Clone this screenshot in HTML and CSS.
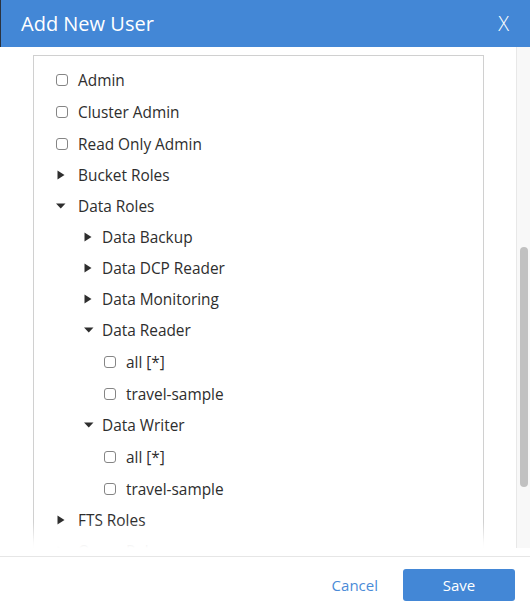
FILE: index.html
```html
<!DOCTYPE html>
<html>
<head>
<meta charset="utf-8">
<link rel="stylesheet" href="styles.css">
</head>
<body>
<div class="modal">
  <header class="modal-header">
    <h1 class="title">Add New User</h1>
    <span class="close">X</span>
  </header>
  <div class="modal-body">
    <div class="scroll-content">
      <div class="roles-box">
        <div class="row cb l1"><span class="slot"><span class="checkbox"></span></span><span class="label">Admin</span></div>
        <div class="row cb l1"><span class="slot"><span class="checkbox"></span></span><span class="label">Cluster Admin</span></div>
        <div class="row cb l1"><span class="slot"><span class="checkbox"></span></span><span class="label">Read Only Admin</span></div>
        <div class="row l1"><span class="slot"><svg class="arrow-r" width="8" height="10" viewBox="0 0 8 10"><path d="M0.5 0.5 L7.5 5 L0.5 9.5 Z"/></svg></span><span class="label">Bucket Roles</span></div>
        <div class="row l1"><span class="slot"><svg class="arrow-d" width="10" height="6" viewBox="0 0 10 6"><path d="M0 0.5 L9.5 0.5 L4.75 5.5 Z"/></svg></span><span class="label">Data Roles</span></div>
        <div class="row l2"><span class="slot"><svg class="arrow-r" width="8" height="10" viewBox="0 0 8 10"><path d="M0.5 0.5 L7.5 5 L0.5 9.5 Z"/></svg></span><span class="label">Data Backup</span></div>
        <div class="row l2"><span class="slot"><svg class="arrow-r" width="8" height="10" viewBox="0 0 8 10"><path d="M0.5 0.5 L7.5 5 L0.5 9.5 Z"/></svg></span><span class="label">Data DCP Reader</span></div>
        <div class="row l2"><span class="slot"><svg class="arrow-r" width="8" height="10" viewBox="0 0 8 10"><path d="M0.5 0.5 L7.5 5 L0.5 9.5 Z"/></svg></span><span class="label">Data Monitoring</span></div>
        <div class="row l2"><span class="slot"><svg class="arrow-d" width="10" height="6" viewBox="0 0 10 6"><path d="M0 0.5 L9.5 0.5 L4.75 5.5 Z"/></svg></span><span class="label">Data Reader</span></div>
        <div class="row cb l3"><span class="slot"><span class="checkbox"></span></span><span class="label">all [*]</span></div>
        <div class="row cb l3"><span class="slot"><span class="checkbox"></span></span><span class="label">travel-sample</span></div>
        <div class="row l2"><span class="slot"><svg class="arrow-d" width="10" height="6" viewBox="0 0 10 6"><path d="M0 0.5 L9.5 0.5 L4.75 5.5 Z"/></svg></span><span class="label">Data Writer</span></div>
        <div class="row cb l3"><span class="slot"><span class="checkbox"></span></span><span class="label">all [*]</span></div>
        <div class="row cb l3"><span class="slot"><span class="checkbox"></span></span><span class="label">travel-sample</span></div>
        <div class="row l1"><span class="slot"><svg class="arrow-r" width="8" height="10" viewBox="0 0 8 10"><path d="M0.5 0.5 L7.5 5 L0.5 9.5 Z"/></svg></span><span class="label">FTS Roles</span></div>
        <div class="row l1"><span class="slot"><svg class="arrow-r" width="8" height="10" viewBox="0 0 8 10"><path d="M0.5 0.5 L7.5 5 L0.5 9.5 Z"/></svg></span><span class="label">Query Roles</span></div>
      </div>
      <div class="fade"></div>
    </div>
    <div class="scrollbar"><div class="thumb"></div></div>
  </div>
  <footer class="modal-footer">
    <button class="btn-cancel">Cancel</button>
    <button class="btn-save">Save</button>
  </footer>
</div>
</body>
</html>
```

FILE: styles.css
```css
* { box-sizing: border-box; }

html, body {
  margin: 0;
  padding: 0;
  background: #ffffff;
}

body {
  font-family: "Open Sans", "Liberation Sans", sans-serif;
  color: #2e2e2e;
}

.modal {
  width: 530px;
  height: 613px;
  display: flex;
  flex-direction: column;
  background: #ffffff;
}

.modal-header {
  height: 47px;
  flex: none;
  background: #4387d6;
  display: flex;
  align-items: center;
  justify-content: space-between;
  padding: 0 21px 0 21px;
  border-left: 1px solid #2a3340;
}

.title {
  margin: 0 0 0 -1px;
  font-size: 20px;
  font-weight: 400;
  line-height: 47px;
  color: #ffffff;
}

.close {
  font-size: 20px;
  line-height: 47px;
  color: #ffffff;
  font-weight: 300;
}

.modal-body {
  height: 501px;
  flex: none;
  display: flex;
}

.scroll-content {
  flex: 1;
  position: relative;
  overflow: hidden;
  padding-top: 8px;
}

.roles-box {
  margin: 0 32px 0 33px;
  border: 1px solid #d0d0d0;
  border-bottom: none;
  padding-top: 7px;
}

.row {
  display: flex;
  align-items: center;
  height: 31px;
  font-size: 15.4px;
  line-height: 20px;
  white-space: nowrap;
}

.row.cb {
  height: 32px;
  padding-top: 2px;
}

.label {
  margin-top: 2px;
}

.l1 { padding-left: 22px; }
.l2 { padding-left: 46px; }
.l3 { padding-left: 70px; }

.slot {
  width: 22px;
  flex: none;
  display: flex;
  align-items: center;
}

.checkbox {
  width: 12px;
  height: 12px;
  border: 1px solid #858585;
  border-radius: 3px;
  background: #ffffff;
}

.arrow-r, .arrow-d {
  fill: #2e2e2e;
  display: block;
}

.l1 .arrow-r { margin-left: 1px; }
.l2 .arrow-r { margin-left: 4px; }
.l2 .arrow-d { margin-left: 4px; }

.fade {
  position: absolute;
  left: 0;
  right: 0;
  bottom: 0;
  height: 26px;
  background: linear-gradient(to bottom, rgba(255,255,255,0), rgba(255,255,255,0.9) 80%, #ffffff);
}

.scrollbar {
  width: 14px;
  flex: none;
  background: #f8f8f8;
  border-left: 1px solid #e8e8e8;
  padding: 200px 2px 0 3px;
}

.thumb {
  width: 8px;
  height: 240px;
  border-radius: 4px;
  background: #c1c1c1;
}

.modal-footer {
  margin-top: 8px;
  flex: 1;
  border-top: 1px solid #e6e6e6;
  display: flex;
  align-items: center;
  justify-content: flex-end;
  padding-right: 15px;
}

.btn-cancel {
  background: none;
  border: none;
  padding: 0;
  font-family: "Open Sans", "Liberation Sans", sans-serif;
  font-size: 15px;
  color: #4a8bd8;
  margin-right: 25px;
}

.btn-save {
  width: 112px;
  height: 32px;
  border: none;
  border-radius: 3px;
  background: #4387d6;
  color: #ffffff;
  font-family: "Open Sans", "Liberation Sans", sans-serif;
  font-size: 15px;
  padding: 0;
}
```
